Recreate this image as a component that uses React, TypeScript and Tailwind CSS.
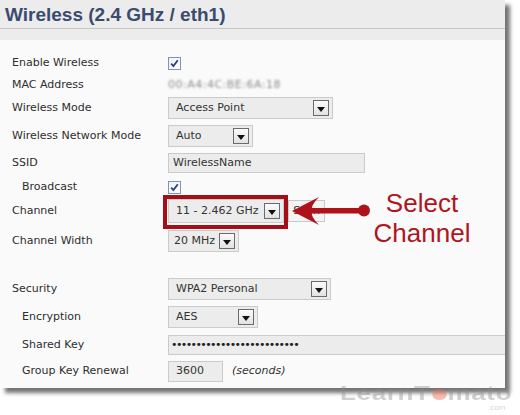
import React from 'react';

const Arrow = () => (
    <span className="absolute right-[3px] top-1/2 -translate-y-1/2 w-[16px] h-[16px] border border-[#6b6b6b] bg-gradient-to-b from-[#fbfbfb] to-[#e2e2e2] flex items-center justify-center">
        <svg width="8" height="5" viewBox="0 0 8 5" className="mt-[2px]">
            <path d="M0 0 L8 0 L4 5 Z" fill="#111" />
        </svg>
    </span>
);

const Select = ({ text, className }: { text: string; className: string }) => (
    <div className={`relative bg-[#ececec] border border-[#cacaca] flex items-center pl-[7px] text-[#333] ${className}`}>
        <span>{text}</span>
        <Arrow />
    </div>
);

const Check = () => (
    <span className="w-[13px] h-[13px] border border-[#8394b3] bg-gradient-to-br from-[#eef1f7] to-[#ffffff] flex items-center justify-center">
        <svg width="9" height="9" viewBox="0 0 9 9">
            <path d="M1.2 4.6 L3.4 7 L7.8 1.2" fill="none" stroke="#2c3f80" strokeWidth="1.8" />
        </svg>
    </span>
);

const Row = ({ label, indent, h, children }: { label: string; indent?: boolean; h: string; children?: React.ReactNode }) => (
    <div className={`flex items-center ${h}`}>
        <div className={`w-[156px] shrink-0 text-[#2e2e2e] ${indent ? 'pl-[10px]' : ''}`}>{label}</div>
        {children}
    </div>
);

export default function App() {
    return (
        <div className="w-[520px] h-[415px] bg-white relative overflow-hidden font-['DejaVu_Sans',sans-serif] text-[11px]">
            <div className="w-[505px] h-[388px] bg-[#fafafa] shadow-[5px_5px_4px_rgba(0,0,0,0.55)] overflow-hidden flex flex-col">
                <div className="h-[29px] shrink-0 bg-[#ececec] border-b border-[#c6c6c6] px-[5px] leading-[29px] font-['Liberation_Sans',sans-serif] font-bold text-[19px] text-[#3b4b6e]">
                    Wireless (2.4 GHz / eth1)
                </div>
                <div className="h-[11px] shrink-0 bg-[#ececec]" />

                <div className="flex flex-col pl-[12px] pt-[12px]">
                    <Row label="Enable Wireless" h="h-[22px]"><Check /></Row>
                    <Row label="MAC Address" h="h-[22px]">
                        <span className="text-[#8d8d8d] blur-[1.2px] tracking-[0.5px]">00:A4:4C:BE:6A:18</span>
                    </Row>
                    <Row label="Wireless Mode" h="h-[24px]">
                        <Select text="Access Point" className="w-[165px] h-[22px]" />
                    </Row>
                    <Row label="Wireless Network Mode" h="h-[32px]">
                        <Select text="Auto" className="w-[85px] h-[22px]" />
                    </Row>
                    <Row label="SSID" h="h-[22px]">
                        <div className="w-[197px] h-[20px] bg-[#ececec] border border-[#cacaca] flex items-center pl-[4px] text-[#333]">WirelessName</div>
                    </Row>
                    <Row label="Broadcast" indent h="h-[26px]"><Check /></Row>
                    <Row label="Channel" h="h-[22px]">
                        <div className="relative">
                            <Select text="11 - 2.462 GHz" className="w-[116px] h-[24px]" />
                            <div className="absolute -top-[4px] -bottom-[6px] -left-[5px] -right-[4px] border-[4px] border-[#a50e16]" />
                        </div>
                        <div className="ml-[4px] w-[37px] h-[22px] bg-[#f3f3f3] border border-[#c9c9c9] flex items-center justify-center text-[#333]">Scan</div>
                    </Row>
                    <Row label="Channel Width" h="h-[38px]">
                        <Select text="20 MHz" className="w-[71px] h-[22px] !pl-[5px]" />
                    </Row>
                    <div className="h-[15px]" />
                    <Row label="Security" h="h-[28px]">
                        <Select text="WPA2 Personal" className="w-[163px] h-[22px]" />
                    </Row>
                    <Row label="Encryption" indent h="h-[28px]">
                        <Select text="AES" className="w-[90px] h-[22px]" />
                    </Row>
                    <Row label="Shared Key" indent h="h-[28px]">
                        <div className="w-[360px] shrink-0 h-[20px] bg-[#ececec] border border-[#cacaca] flex items-center pl-[2px] text-[#222] text-[11px] tracking-[-1.6px]">
                            ••••••••••••••••••••••••••
                        </div>
                    </Row>
                    <Row label="Group Key Renewal" indent h="h-[24px]">
                        <div className="w-[55px] h-[21px] bg-[#ececec] border border-[#cacaca] flex items-center pl-[7px] text-[#333]">3600</div>
                        <span className="ml-[9px] italic text-[#333]">(seconds)</span>
                    </Row>
                </div>
            </div>

            {/* annotation arrow */}
            <svg className="absolute left-[288px] top-[195px]" width="85" height="32" viewBox="0 0 85 32">
                <path d="M4 16 L31 2 Q22 11 24 16 Q22 21 31 30 Z" fill="#b0121b" />
                <rect x="20" y="13" width="56" height="5.5" fill="#b0121b" />
                <circle cx="76" cy="15.5" r="6" fill="#b0121b" />
            </svg>
            <div className="absolute left-[367px] top-[188px] w-[110px] text-center font-['Liberation_Sans',sans-serif] text-[26px] leading-[30px] text-[#b0151d]">
                Select<br />Channel
            </div>

            {/* watermark */}
            <div className="absolute left-[340px] top-[378px] origin-left scale-x-[1.3] font-['Liberation_Sans',sans-serif] font-bold text-[20px] tracking-[0.5px] text-[rgba(140,140,140,0.4)] flex items-center">
                <span>LearnT</span>
                <span className="w-[11px] h-[11px] rounded-full bg-[rgba(235,110,90,0.45)] mx-[1px] mt-[3px]" />
                <span>mato</span>
            </div>
            <div className="absolute left-[488px] top-[402px] font-['Liberation_Sans',sans-serif] text-[8px] text-[rgba(120,120,120,0.35)]">.com</div>
        </div>
    );
}
